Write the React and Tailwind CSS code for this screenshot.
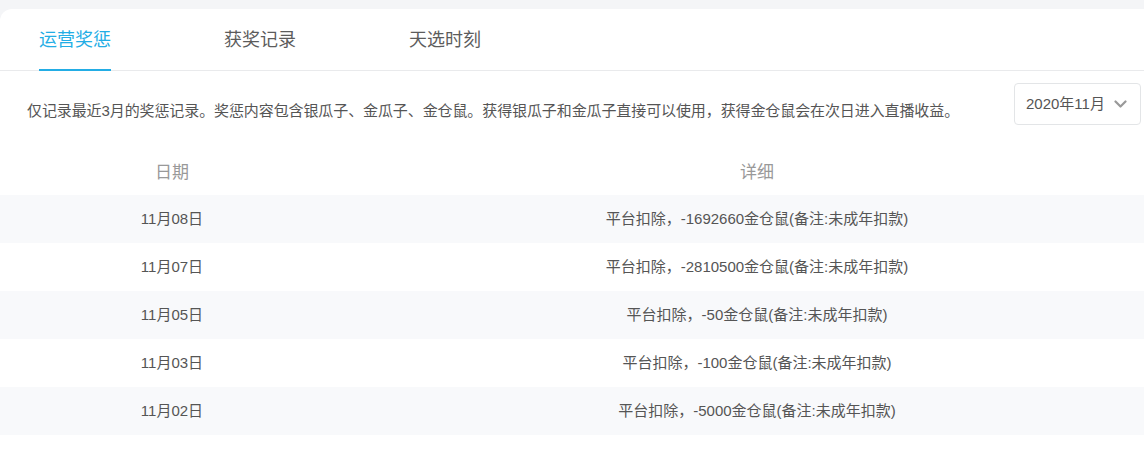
import React, { useState } from 'react';

const tabs = ['运营奖惩', '获奖记录', '天选时刻'];

const records = [
    { date: '11月08日', detail: '平台扣除，-1692660金仓鼠(备注:未成年扣款)' },
    { date: '11月07日', detail: '平台扣除，-2810500金仓鼠(备注:未成年扣款)' },
    { date: '11月05日', detail: '平台扣除，-50金仓鼠(备注:未成年扣款)' },
    { date: '11月03日', detail: '平台扣除，-100金仓鼠(备注:未成年扣款)' },
    { date: '11月02日', detail: '平台扣除，-5000金仓鼠(备注:未成年扣款)' },
];

const ChevronDown = () => (
    <svg width="13" height="9" viewBox="0 0 13 9" fill="none">
        <path d="M1.5 1.5l5 5 5-5" stroke="#999" strokeWidth="2.2" strokeLinecap="round" strokeLinejoin="round" />
    </svg>
);

const App = () => {
    const [activeTab, setActiveTab] = useState(0);

    return (
        <div
            className="min-h-[458px] bg-[#f4f5f7] pt-[9px] overflow-hidden"
            style={{ fontFamily: '"Liberation Sans", "Noto Sans CJK SC", sans-serif' }}
        >
            <div className="bg-white rounded-tl-[12px] min-h-[449px]">
                <div className="flex h-[62px] border-b border-[#e9eaec] pl-[39px] gap-[113px]">
                    {tabs.map((tab, i) => (
                        <div
                            key={tab}
                            onClick={() => setActiveTab(i)}
                            className={`relative h-full cursor-pointer text-[18px] leading-[18px] pt-[22px] ${
                                i === activeTab ? 'text-[#23ade5]' : 'text-[#5c5c5c]'
                            }`}
                        >
                            {tab}
                            {i === activeTab && (
                                <span className="absolute left-0 right-0 bottom-[-1px] h-[2px] bg-[#23ade5]" />
                            )}
                        </div>
                    ))}
                </div>

                <div className="flex items-center justify-between pl-[27px] pr-[3px] pt-[12px]">
                    <p className="text-[15px] text-[#555] mt-[14px] tracking-[-0.1px]">
                        仅记录最近3月的奖惩记录。奖惩内容包含银瓜子、金瓜子、金仓鼠。获得银瓜子和金瓜子直接可以使用，获得金仓鼠会在次日进入直播收益。
                    </p>
                    <div className="flex items-center justify-between w-[127px] h-[42px] border border-[#e3e5e7] rounded-[4px] pl-[11px] pr-[13px] text-[15px] text-[#555]">
                        <span>2020年11月</span>
                        <ChevronDown />
                    </div>
                </div>

                <div className="mt-[26px]">
                    <div className="flex h-[44px] items-center text-[17px] text-[#999]">
                        <div className="w-[344px] text-center">日期</div>
                        <div className="flex-1 text-center pl-[26px]">详细</div>
                    </div>
                    {records.map((r, i) => (
                        <div
                            key={r.date}
                            className={`flex h-[48px] items-center text-[15px] text-[#555] ${
                                i % 2 === 0 ? 'bg-[#f8f9fb]' : 'bg-white'
                            }`}
                        >
                            <div className="w-[344px] text-center">{r.date}</div>
                            <div className="flex-1 text-center pl-[26px]">{r.detail}</div>
                        </div>
                    ))}
                </div>
            </div>
        </div>
    );
};

export default App;
